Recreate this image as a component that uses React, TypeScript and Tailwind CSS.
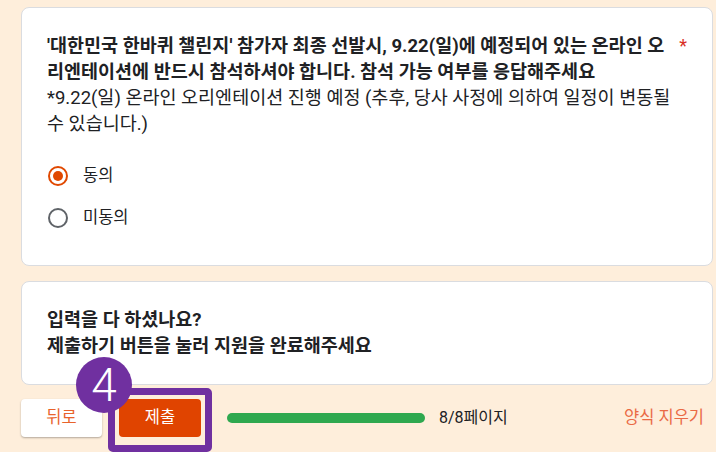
import React from "react";

const font = { fontFamily: "Roboto, 'Noto Sans CJK KR', sans-serif" };

const options = [
  { label: "동의", checked: true },
  { label: "미동의", checked: false },
];

function Radio({ checked }: { checked: boolean }) {
  return (
    <span
      className={
        checked
          ? "flex h-[20px] w-[20px] items-center justify-center rounded-full border-2 border-[#e04800]"
          : "flex h-[20px] w-[20px] items-center justify-center rounded-full border-2 border-[#5f6368]"
      }
    >
      {checked && <span className="h-[10px] w-[10px] rounded-full bg-[#e04800]" />}
    </span>
  );
}

export default function App() {
  return (
    <div
      className="relative flex h-[452px] w-[716px] flex-col overflow-hidden bg-[#feeedb] pl-[21px] pr-[3px] text-[#202124]"
      style={font}
    >
      {/* 질문 카드 */}
      <div className="mt-[7px] h-[259px] rounded-lg border border-[#dadce0] bg-white pl-[25px] pr-[25px] pt-[25px]">
        <div className="flex">
          <div className="flex-1 whitespace-nowrap">
            <p className="text-[18.5px] font-bold leading-[26px]">
              '대한민국 한바퀴 챌린지' 참가자 최종 선발시, 9.22(일)에 예정되어 있는 온라인 오
              <br />
              리엔테이션에 반드시 참석하셔야 합니다. 참석 가능 여부를 응답해주세요
            </p>
            <p className="text-[18.5px] leading-[26px]">
              *9.22(일) 온라인 오리엔테이션 진행 예정 (추후, 당사 사정에 의하여 일정이 변동될
              <br />
              수 있습니다.)
            </p>
          </div>
          <span className="ml-[8px] text-[18px] leading-[26px] text-[#d93025]">*</span>
        </div>

        <div className="mt-[18px] flex flex-col">
          {options.map((o) => (
            <label key={o.label} className="flex h-[42px] items-center">
              <span className="ml-[1px]">
                <Radio checked={o.checked} />
              </span>
              <span className="ml-[15px] text-[16.5px] text-[#202124]">{o.label}</span>
            </label>
          ))}
        </div>
      </div>

      {/* 안내 카드 */}
      <div className="mt-[15px] flex h-[104px] flex-col rounded-lg border border-[#dadce0] bg-white pl-[25px] pt-[25px]">
        <p className="text-[18.5px] font-bold leading-[26px]">입력을 다 하셨나요?</p>
        <p className="text-[18.5px] font-bold leading-[26px]">제출하기 버튼을 눌러 지원을 완료해주세요</p>
      </div>

      {/* 하단 버튼 */}
      <div className="mt-[14px] flex items-center">
        <button className="flex h-[38px] w-[81px] items-center justify-center rounded bg-white text-[16.5px] text-[#e8632b] shadow-[0_1px_2px_rgba(0,0,0,0.3)]">
          뒤로
        </button>
        <button className="ml-[17px] flex h-[38px] w-[82px] items-center justify-center rounded bg-[#e04400] text-[16.5px] text-white">
          제출
        </button>
        <div className="ml-[26px] h-[10px] w-[198px] rounded-full bg-[#2fa84f]" />
        <span className="ml-[14px] text-[16px] text-[#202124]">8/8페이지</span>
        <span className="ml-auto mr-[9px] text-[16.5px] text-[#ea6a45]">양식 지우기</span>
      </div>

      {/* 주석 표시 */}
      <div className="absolute left-[108px] top-[388px] h-[64px] w-[104px] rounded-[5px] border-[7px] border-[#7030a0]" />
      <div className="absolute left-[76px] top-[357px] flex h-[56px] w-[56px] items-center justify-center rounded-full bg-[#7030a0] text-[46px] font-light leading-none text-white">
        4
      </div>
    </div>
  );
}
